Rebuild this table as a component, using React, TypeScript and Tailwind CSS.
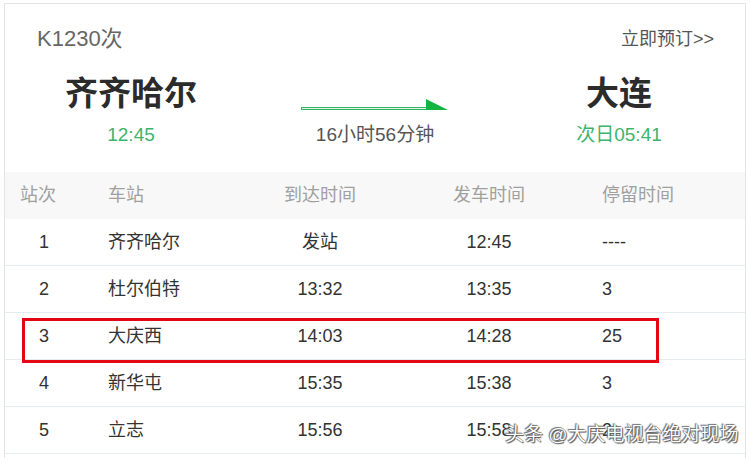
import React from "react";

const rows = [
  { no: "1", name: "齐齐哈尔", arr: "发站", dep: "12:45", stay: "----" },
  { no: "2", name: "杜尔伯特", arr: "13:32", dep: "13:35", stay: "3" },
  { no: "3", name: "大庆西", arr: "14:03", dep: "14:28", stay: "25" },
  { no: "4", name: "新华屯", arr: "15:35", dep: "15:38", stay: "3" },
  { no: "5", name: "立志", arr: "15:56", dep: "15:58", stay: "2" },
];

function Arrow() {
  return (
    <svg width="148" height="13" viewBox="0 0 148 13">
      <rect x="0.5" y="9.5" width="128" height="2" fill="#e3f5e9" stroke="#2fb45f" strokeWidth="1" />
      <polygon points="125,1 147,12 125,12" fill="#12b540" />
    </svg>
  );
}

export default function App() {
  return (
    <div className="w-[751px] h-[458px] overflow-hidden bg-white font-['Liberation_Sans','Noto_Sans_CJK_SC',sans-serif]">
      <div className="relative ml-[4px] mt-[3px] w-[742px] h-[470px] border border-[#e4e4e4]">
        {/* top section */}
        <div className="flex items-center justify-between mt-[21px] pl-[32px] pr-[31px] h-[28px]">
          <span className="text-[22px] leading-[28px] text-[#666]">K1230次</span>
          <span className="text-[18px] leading-[28px] text-[#555]">立即预订&gt;&gt;</span>
        </div>
        <div className="grid grid-cols-[252px_236px_252px] mt-[21px]">
          <div className="flex flex-col items-center">
            <span className="text-[33px] leading-[40px] font-bold text-[#2b2b2b]">齐齐哈尔</span>
            <span className="mt-[8px] text-[19px] leading-[26px] text-[#3cb46e]">12:45</span>
          </div>
          <div className="flex flex-col items-center">
            <div className="h-[40px] flex items-end justify-center pb-[3px]">
              <Arrow />
            </div>
            <span className="mt-[8px] text-[19px] leading-[26px] text-[#555]">16小时56分钟</span>
          </div>
          <div className="flex flex-col items-center">
            <span className="text-[33px] leading-[40px] font-bold text-[#2b2b2b]">大连</span>
            <span className="mt-[8px] text-[19px] leading-[26px] text-[#3cb46e]">次日05:41</span>
          </div>
        </div>

        {/* table */}
        <div className="mt-[24px]">
          <div className="grid grid-cols-[103px_132px_160px_178px_1fr] h-[47px] items-center bg-[#f8f8f8] text-[18px] text-[#a0a0a0]">
            <div className="pl-[15px]">站次</div>
            <div>车站</div>
            <div className="text-center">到达时间</div>
            <div className="text-center">发车时间</div>
            <div className="pl-[24px]">停留时间</div>
          </div>
          {rows.map((r) => (
            <div
              key={r.no}
              className="grid grid-cols-[103px_132px_160px_178px_1fr] h-[47px] items-center border-b border-[#e6ebf0] text-[18px] text-[#333]"
            >
              <div className="pl-[34px]">{r.no}</div>
              <div>{r.name}</div>
              <div className="text-center">{r.arr}</div>
              <div className="text-center">{r.dep}</div>
              <div className="pl-[24px]">{r.stay}</div>
            </div>
          ))}
        </div>

        {/* red highlight box */}
        <div className="absolute left-[17px] top-[314px] w-[637px] h-[45px] border-[3px] border-[#e30613]" />

        {/* watermark */}
        <div className="absolute left-[500px] top-[419px] text-[19px] leading-[24px] text-white [text-shadow:0_0_1px_#333,1px_1px_1px_#555,-1px_-1px_1px_#777] whitespace-nowrap">
          头条 @大庆电视台绝对现场
        </div>
      </div>
    </div>
  );
}
